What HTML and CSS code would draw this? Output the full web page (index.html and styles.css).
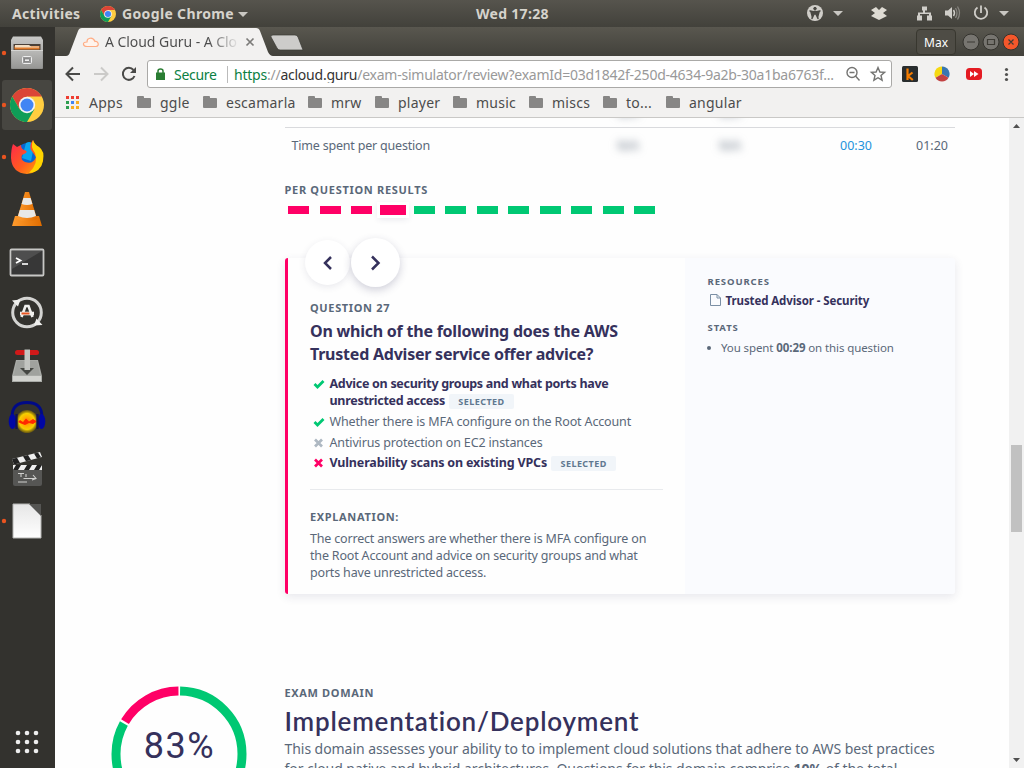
FILE: index.html
```html
<!DOCTYPE html>
<html lang="en">
<head>
<meta charset="utf-8">
<title>A Cloud Guru - A Cloud Guru</title>
<link rel="stylesheet" href="styles.css">
</head>
<body>
<div class="desktop">
  <header class="topbar">
    <span class="activities">Activities</span>
    <svg class="app-icon" width="16" height="16" viewBox="0 0 34 34"><use href="#chrome"/></svg>
    <span class="app-name">Google Chrome</span>
    <svg class="app-caret" width="10" height="5"><path d="M0 0H10L5 5Z" fill="#c9c7c2"/></svg>
    <span class="clock">Wed 17:28</span>
    <svg class="tray" width="224" height="27" viewBox="800 0 224 27">
      <circle cx="815" cy="13" r="8" fill="#d0cec9"/>
      <g fill="#494843" stroke="#494843"><circle cx="815" cy="8.600" r="1.300"/><path d="M810 11L814 11.8V14L812 18.5M820 11L816 11.8V14L818 18.5M814.500 11.500H815.500V14H814.500Z" stroke-width="1.500" stroke-linecap="round"/></g>
      <path d="M833 11H843L838 16ZM999 11H1009L1004 16Z" fill="#c9c7c2"/>
      <path d="M871 10L876 7L879 10L882 7L887 10L883 13L887 16L879 20L871 16L875 13Z" fill="#dedbd3"/>
      <path d="M922 6.500h5v4h-2v2h6v3h1v5h-5v-5h2v-1.500h-9v1.500h2v5h-5v-5h1v-3h5v-2h-1Z" fill="#d0cec9"/>
      <path d="M945 10.500h3l4-3.500v12l-4-3.500h-3Z" fill="#d0cec9"/>
      <path d="M953.500 10q2 3 0 6" fill="none" stroke="#d0cec9" stroke-width="1.400"/>
      <path d="M955.500 8q3 5 0 10M957.500 6.500q4 6.500 0 13" fill="none" stroke="#87857f" stroke-width="1.300"/>
      <path d="M977.500 7.500a6.200 6.200 0 1 0 7 0M981 5.500V13" fill="none" stroke="#d0cec9" stroke-width="1.800"/>
    </svg>
  </header>

  <div class="workspace">
    <nav class="dock">
      <svg width="55" height="741" viewBox="0 27 55 741">
        <defs>
          <linearGradient id="silver" x2="0" y2="1"><stop stop-color="#c9c9c7"/><stop offset="1" stop-color="#8d8d8b"/></linearGradient>
          <linearGradient id="front" x2="0" y2="1"><stop stop-color="#b9b9b7"/><stop offset="1" stop-color="#979795"/></linearGradient>
          <linearGradient id="fox" x2="1" y2="1"><stop stop-color="#ff244f"/><stop offset=".55" stop-color="#ff5b20"/><stop offset="1" stop-color="#ffb500"/></linearGradient>
          <linearGradient id="cone" x2="1"><stop stop-color="#ff9b2d"/><stop offset="1" stop-color="#e06d00"/></linearGradient>
          <linearGradient id="paper" x2="0" y2="1"><stop stop-color="#e6e6e6"/><stop offset="1" stop-color="#fff"/></linearGradient>
          <radialGradient id="flame"><stop stop-color="#ff7a00"/><stop offset=".4" stop-color="#ffb000"/><stop offset=".7" stop-color="#f5d000"/><stop offset="1" stop-color="#8a7000" stop-opacity=".6"/></radialGradient>
          <symbol id="chrome" viewBox="0 0 34 34">
            <circle cx="17" cy="17" r="17" fill="#ffcd40"/>
            <path d="M2.280 8.500A17 17 0 0 1 31.700 8.500H17L9.600 21.200Z" fill="#db4437"/>
            <path d="M2.280 8.500A17 17 0 0 0 17 34L24.400 21.200L9.600 21.200Z" fill="#0f9d58"/>
            <circle cx="17" cy="17" r="8.200" fill="#f3f3f3"/><circle cx="17" cy="17" r="6.500" fill="#4285f4"/>
          </symbol>
        </defs>
        <rect x="2" y="80" width="50" height="50" rx="3" fill="#474641"/>
        <g fill="#e95420"><circle cx="4" cy="53" r="2.200"/><circle cx="4" cy="105" r="2.200"/><circle cx="4" cy="157" r="2.200"/><circle cx="4" cy="521" r="2.200"/></g>
        <path d="M13 36.500H41L43 40V68Q43 69 42 69H12Q11 69 11 68V40Z" fill="url(#silver)"/>
        <path d="M13.500 44H40.500V51H13.500Z" fill="#4b4038"/><path d="M14.500 46H39.500V49.500H14.500Z" fill="#e07b2b"/><path d="M15 45H29L31 46.500H39V47.500H15Z" fill="#f3ddc1"/>
        <path d="M12 50.500H42V68H12Z" fill="url(#front)"/><path d="M11 50H43V51H11Z" fill="#d5d5d3"/>
        <rect x="22.500" y="56.500" width="9" height="7" rx="1" fill="#999" stroke="#eee"/><rect x="24.500" y="59" width="5" height="2.500" fill="#eee" stroke="#666" stroke-width=".6"/>
        <use href="#chrome" x="10" y="88" width="34" height="34"/>
        <circle cx="28" cy="156" r="13" fill="#0867d2"/><path d="M26 143Q31 140 34 146L31 161L22 158Z" fill="#0aa5ee"/>
        <path d="M13 144L17 147L21 145Q21 149 24 150Q28 151 26 153L22 155Q20 160 25 162Q33 165 36 157L31 150Q29 145 33 140Q35 146 39 147Q45 155 42 163Q37 174 27 174Q12 173 11 158Q11 149 13 144Z" fill="url(#fox)"/>
        <path d="M33 140Q30 147 35 153Q39 163 29 173Q41 172 43 161Q45 151 39 147Q34 144 33 140Z" fill="#ffd400"/>
        <path d="M15 216H39L42 226H12Z" fill="url(#cone)"/>
        <path d="M25 192H29L37 219Q27 224 17 219Z" fill="url(#cone)"/><path d="M23.400 198H30.600L32.400 204Q27 206 21.600 204ZM19.800 210H34.200L36 216Q27 220 18 216Z" fill="#e8e8e6"/>
        <rect x="10.500" y="249.500" width="33" height="26" rx="1" fill="#373737" stroke="#c7c7c5" stroke-width="1.800"/><path d="M12 251H42L12 269Z" fill="#4e4e4e"/>
        <path d="M16 258L20.500 260.500L16 263" fill="none" stroke="#fff" stroke-width="1.800"/><path d="M22 264H28" stroke="#fff" stroke-width="1.600"/>
        <circle cx="27" cy="312.500" r="14.300" fill="none" stroke="#d4d4d2" stroke-width="3"/>
        <path d="M12 300.500L20.500 299.500L18 306.500ZM42.500 325L34 325.500L36.500 318.500Z" fill="#efefed"/>
        <path d="M21.500 317L25.500 306H28.500L32.500 317" fill="none" stroke="#f0f0ee" stroke-width="2.600"/><path d="M20 313.500H34" stroke="#f0f0ee" stroke-width="3.600"/><path d="M21.500 313.500H29.500" stroke="#e95420" stroke-width="2"/>
        <path d="M16 360H38L42 376V382H12V376Z" fill="#a9aba7"/><path d="M17 361H37L40 375H14Z" fill="#a0a29e"/><path d="M13 376H41V381H13Z" fill="#d2d3cf"/><path d="M20 368H34L27 375Z" fill="#454743"/>
        <rect x="15" y="350" width="24" height="5" rx="2.500" fill="#d01919"/><path d="M24.500 349.500H30V370H24.500Z" fill="#c3c5c1"/>
        <ellipse cx="27" cy="421.500" rx="11" ry="11.500" fill="url(#flame)"/><path d="M18 422L20 420L23 422L26 418.500L29 421.500L33 419L37 421.500L33 424L29 423L25 425L21 423.500Z" fill="#ff2800"/>
        <path d="M12 417Q12 402.500 27 402.500T42 417" fill="none" stroke="#000a87" stroke-width="2.800"/><ellipse cx="12.500" cy="421.500" rx="3.800" ry="7.500" fill="#0007a4"/><ellipse cx="41.500" cy="421.500" rx="3.800" ry="7.500" fill="#0007a4"/><path d="M16.500 414V429M37.500 414V429" stroke="#111252" stroke-width="2.200"/>
        <path d="M13 466H42V484Q42 486 40 486H15Q13 486 13 484Z" fill="#565654"/><path d="M12 459L40 452L42 457L14 464.500Z" fill="#eee"/><path d="M12 459L17 457.700L20 463L14 464.500ZM23 456.200L28 455L31 460L26 461.300ZM34 453.500L38 452.500L41 457.300L37 458.400Z" fill="#222"/>
        <path d="M13 465H42V470H13Z" fill="#eee"/><path d="M16 465H21L18 470H13ZM27 465H32L29 470H24ZM37 465H42L39 470H34Z" fill="#222"/>
        <path d="M18 473.500H24M21 473.500V477M26 474V477M23.500 478.500H35M18 482H27M33 475L36 478.500L32 480" fill="none" stroke="#cfcfcd" stroke-width="1.100"/>
        <path d="M13 504H30L41 515V538H13Z" fill="url(#paper)" stroke="#b5b5b3"/><path d="M29 504H41V516Z" fill="#555553"/>
        <g fill="#eee"><circle cx="18" cy="733" r="2.300"/><circle cx="27" cy="733" r="2.300"/><circle cx="36" cy="733" r="2.300"/><circle cx="18" cy="742" r="2.300"/><circle cx="27" cy="742" r="2.300"/><circle cx="36" cy="742" r="2.300"/><circle cx="18" cy="751" r="2.300"/><circle cx="27" cy="751" r="2.300"/><circle cx="36" cy="751" r="2.300"/></g>
      </svg>
    </nav>

    <main class="browser">
      <div class="tabstrip">
        <svg class="tab-shape" width="250" height="29" viewBox="55 27 250 29">
          <path d="M66 56Q69 56 70 52L78 31Q79 28 82 28H256Q259 28 260 31L268 52Q270 56 273 56Z" fill="#f2f1f0"/>
          <path d="M273 35H295Q297 35 298 37L303 50H280Q278 50 277 48L271 37Q270 35 273 35Z" fill="#cdccca" stroke="#3a3934" stroke-width=".7"/>
          <path d="M87 46.500H96Q99 46 98 43Q97 41 95 41.500Q93 37 89 38.500Q87 39 87 42Q83 42 83.500 44.500Q84 46.500 87 46.500Z" fill="#fff4ed" stroke="#ffad85" stroke-width="1.200"/>
          <path d="M246.500 38.500L253.500 45.500M253.500 38.500L246.500 45.500" stroke="#7c7b79" stroke-width="1.700"/>
        </svg>
        <span class="tab-title">A Cloud Guru - A Clo</span>
        <span class="user-button">Max</span>
        <svg class="window-buttons" width="60" height="29" viewBox="960 27 60 29">
          <g stroke="#34332e"><circle cx="971" cy="42" r="8" fill="#777570"/><circle cx="991" cy="42" r="8" fill="#777570"/><circle cx="1011" cy="42" r="8" fill="#f4572b"/></g>
          <path d="M967 42H975M987.500 39.500H994.500V44.500H987.500ZM1008.500 39.500L1013.500 44.500M1013.500 39.500L1008.500 44.500" fill="none" stroke="#3d3b35" stroke-width="1.200"/>
        </svg>
      </div>
      <div class="toolbar">
        <svg width="92" height="34" viewBox="55 56 92 34" fill="none" stroke="#4a4a48" stroke-width="2">
          <path d="M80 74H67M73 67.500L66.500 74L73 80.500"/><path d="M94 74H107M101 67.500L107.500 74L101 80.500" stroke="#cbcac8"/>
          <path d="M133.500 70A6 6 0 1 0 134.500 76"/><path d="M136 67V73H130Z" fill="#4a4a48" stroke="none"/>
        </svg>
        <div class="omnibox">
          <svg class="lock" width="9" height="12"><path d="M0 4.500H9V12H0Z" fill="#2a7d33"/><path d="M2 5V3Q2 1 4.500 1T7 3V5" fill="none" stroke="#2a7d33" stroke-width="1.500"/></svg>
          <span class="secure">Secure</span>
          <span class="url"><span class="scheme">https</span>://<b class="host">acloud.guru</b>/exam-simulator/review?examId=03d1842f-250d-4634-9a2b-30a1ba6763f...</span>
          <svg class="omni-icons" width="44" height="24" viewBox="844 62 44 24" fill="none" stroke="#747472" stroke-width="1.400">
            <circle cx="852" cy="72.500" r="5"/><path d="M849.500 72.500H854.500M855.500 76L859.500 80.500"/>
            <path d="M878 67.500L879.900 72L884.600 72.400L881 75.500L882.100 80.200L878 77.700L873.900 80.200L875 75.500L871.400 72.400L876.100 72Z"/>
          </svg>
        </div>
        <svg class="extensions" width="128" height="34" viewBox="896 56 128 34">
          <rect x="902" y="66" width="16" height="16" rx="1.500" fill="#292d2e"/><path d="M907.500 68.500V80M912.500 72.500L908 76L912.800 80" fill="none" stroke="#f57c00" stroke-width="2.200"/>
          <path d="M942 74V66.500A7.500 7.500 0 0 0 935.500 77.800Z" fill="#f6d912"/><path d="M942 74V66.500A7.500 7.500 0 0 1 948.500 77.800Z" fill="#3976b0"/><path d="M942 74L935.500 77.800A7.500 7.500 0 0 0 948.500 77.800Z" fill="#c34242"/>
          <rect x="966" y="68" width="16" height="12" rx="3.500" fill="#e41b22"/><path d="M970 71L974 74L970 77ZM974 71L978.500 74L974 77Z" fill="#fff"/>
          <g fill="#51514f"><circle cx="1006.500" cy="69.500" r="1.600"/><circle cx="1006.500" cy="74.500" r="1.600"/><circle cx="1006.500" cy="79.500" r="1.600"/></g>
        </svg>
      </div>
      <div class="bookmarks">
        <svg class="apps" width="14" height="14"><g><path d="M0 0h3v3H0zM5 0h3v3H5zM10 0h3v3h-3z" fill="#ee3d32"/><path d="M0 5h3v3H0z" fill="#2e9d50"/><path d="M5 5h3v3H5z" fill="#4285f4"/><path d="M10 5h3v3h-3z" fill="#f7ad24"/><path d="M0 10h3v3H0z" fill="#2e9d50"/><path d="M5 10h3v3H5zM10 10h3v3h-3z" fill="#f7ad24"/></g></svg>
        <span class="bm bm-apps">Apps</span>
        <i class="folder"></i><span class="bm bm-ggle">ggle</span>
        <i class="folder"></i><span class="bm bm-escamarla">escamarla</span>
        <i class="folder"></i><span class="bm bm-mrw">mrw</span>
        <i class="folder"></i><span class="bm bm-player">player</span>
        <i class="folder"></i><span class="bm bm-music">music</span>
        <i class="folder"></i><span class="bm bm-miscs">miscs</span>
        <i class="folder"></i><span class="bm bm-to">to...</span>
        <i class="folder"></i><span class="bm">angular</span>
      </div>

      <div class="viewport">
        <div class="page">
          <div class="previous-row"><span class="smudge first">N/A</span><span class="smudge second">N/A</span></div>
          <div class="time-row"><span class="time-label">Time spent per question</span><span class="smudge first">N/A</span><span class="smudge second">N/A</span><span class="mine">00:30</span><span class="average">01:20</span></div>
          <h4 class="eyebrow results-title">PER QUESTION RESULTS</h4>
          <div class="results">
            <i class="bad"></i><i class="bad"></i><i class="bad"></i><i class="bad current"></i><i></i><i></i><i></i><i></i><i></i><i></i><i></i><i></i>
          </div>
          <section class="card">
            <div class="pager">
              <span class="prev"><svg width="12" height="16" viewBox="0 0 12 16"><path d="M9 2L3 8L9 14"/></svg></span>
              <span class="next"><svg width="12" height="16" viewBox="0 0 12 16"><path d="M2 1.500L8.500 8L2 14.500"/></svg></span>
            </div>
            <div class="question">
              <h4 class="eyebrow question-no">QUESTION 27</h4>
              <h2 class="heading">On which of the following does the AWS<br>Trusted Adviser service offer advice?</h2>
              <ul class="answers">
                <li class="chosen two-line"><svg class="mark" width="12" height="12"><path d="M1.500 6L4.500 9L10.500 3" fill="none" stroke="#00c873" stroke-width="2.800"/></svg><span>Advice on security groups and what ports have<br>unrestricted access <em>SELECTED</em></span></li>
                <li><svg class="mark" width="12" height="12"><path d="M1.500 6L4.500 9L10.500 3" fill="none" stroke="#00c873" stroke-width="2.800"/></svg><span>Whether there is MFA configure on the Root Account</span></li>
                <li><svg class="mark" width="12" height="12"><path d="M2 2.500L9 9.500M9 2.500L2 9.500" stroke="#aeb8c2" stroke-width="2.700"/></svg><span>Antivirus protection on EC2 instances</span></li>
                <li class="chosen last"><svg class="mark" width="12" height="12"><path d="M2 2.500L9 9.500M9 2.500L2 9.500" stroke="#ff0066" stroke-width="2.700"/></svg><span>Vulnerability scans on existing VPCs <em>SELECTED</em></span></li>
              </ul>
              <h4 class="eyebrow explanation-title">EXPLANATION:</h4>
              <p class="explanation">The correct answers are whether there is MFA configure on<br>the Root Account and advice on security groups and what<br>ports have unrestricted access.</p>
            </div>
            <aside class="side">
              <h5>RESOURCES</h5>
              <a class="resource"><svg width="11" height="13"><path d="M.5.500H7L10.500 4V11.500H.5ZM7 .5V4H10.500" fill="none" stroke="#7b8fa5"/></svg><span>Trusted Advisor - Security</span></a>
              <h5>STATS</h5>
              <p class="stat"><i></i>You spent <b>00:29</b> on this question</p>
            </aside>
          </section>
          <section class="domain">
            <div class="ring">
              <svg width="136" height="136" viewBox="0 0 136 136"><g fill="none" stroke-width="9" transform="rotate(-90 68 68)"><circle cx="68" cy="68" r="63" pathLength="360" stroke="#00c873" stroke-dasharray="298 62" stroke-dashoffset="-1"/><circle cx="68" cy="68" r="63" pathLength="360" stroke="#ff0066" stroke-dasharray="58.500 301.500" stroke-dashoffset="-301"/></g></svg>
              <span class="percent">83%</span>
            </div>
            <div class="domain-text">
              <h4 class="eyebrow">EXAM DOMAIN</h4>
              <h1>Implementation/Deployment</h1>
              <p>This domain assesses your ability to to implement cloud solutions that adhere to AWS best practices<br>for cloud native and hybrid architectures. Questions for this domain comprise <b>10%</b> of the total</p>
            </div>
          </section>
        </div>
        <div class="scrollbar"><svg width="15" height="650"><path d="M4 10L7.500 6L11 10ZM4 640H11L7.500 644Z" fill="#505050"/><rect x="2" y="327" width="11" height="87" fill="#c1c1c1"/></svg></div>
      </div>
    </main>
  </div>
</div>
</body>
</html>
```
FILE: styles.css
```css
* { box-sizing: border-box; }
body, h1, h2, h4, h5, p, ul { margin: 0; padding: 0; }
body { font-family: "Noto Sans", "Open Sans", sans-serif; color: #5a6879; }
svg { display: block; flex: none; }
span { white-space: nowrap; }
.desktop { width: 1024px; height: 768px; overflow: hidden; display: flex; flex-direction: column; }

.topbar { height: 27px; flex: none; display: flex; align-items: center; background: linear-gradient(#56544d, #42413b); color: #d6d3cc; font-size: 14px; font-weight: 700; line-height: 27px; }
.activities { width: 88px; padding-left: 12px; letter-spacing: .35px; }
.app-icon { margin-left: 12px; }
.app-name { width: 116px; margin-left: 6px; letter-spacing: .35px; }
.app-caret { margin-top: 1px; }
.clock { width: 72px; margin-left: 228px; letter-spacing: .3px; }
.tray { margin-left: auto; }

.workspace { height: 741px; display: flex; }
.dock { width: 55px; flex: none; background: #33322e; }
.browser { width: 969px; display: flex; flex-direction: column; background: #f2f1f0; }
.tabstrip { height: 29px; flex: none; display: flex; position: relative; background: linear-gradient(#59574f, #42413b); }
.tab-shape { position: absolute; left: 0; top: 0; }
.tab-title { position: relative; width: 134px; margin-left: 50px; overflow: hidden; font-size: 14px; letter-spacing: -.05px; line-height: 29px; color: transparent; background: linear-gradient(90deg, #4c4c4c 104px, rgba(76,76,76,.05) 133px); -webkit-background-clip: text; background-clip: text; }
.user-button { width: 40px; height: 26px; margin: 2px 4px 0 auto; border: 1px solid #38372f; border-radius: 4px; background: #4e4c45; color: #fff; font-size: 12px; line-height: 25px; text-align: center; }
.window-buttons { margin-right: 4px; }

.toolbar { height: 34px; flex: none; display: flex; }
.omnibox { width: 745px; height: 28px; margin-top: 4px; border: 1px solid #aaa9a7; border-radius: 3px; background: #fff; display: flex; align-items: center; font-size: 14px; color: #999; }
.lock { margin-left: 8px; }
.secure { width: 45px; margin-left: 9px; color: #0b8043; letter-spacing: -.3px; }
.url { width: 610px; margin-left: 8px; padding-left: 6px; border-left: 1px solid #bbb; line-height: 17px; letter-spacing: -.235px; overflow: hidden; }
.scheme { color: #0b8043; }
.host { color: #333; font-weight: 400; }
.omni-icons { margin-left: 7px; }
.extensions { margin-left: 4px; }

.bookmarks { height: 28px; flex: none; display: flex; align-items: center; padding: 0 0 2px 11px; border-bottom: 1px solid #c9c8c6; font-size: 14px; letter-spacing: .25px; color: #4c4c4c; }
.folder { width: 14px; height: 10px; margin-right: 9px; position: relative; border-radius: 1px; background: #878685; flex: none; }
.folder::before { content: ""; position: absolute; left: 0; top: -2px; width: 7px; height: 3px; border-radius: 1px; background: #878685; }
.bm-apps { width: 48px; margin-left: 9px; }
.bm-ggle { width: 43px; }
.bm-escamarla { width: 82px; }
.bm-mrw { width: 44px; }
.bm-player { width: 55px; }
.bm-music { width: 53px; }
.bm-miscs { width: 51px; }
.bm-to { width: 40px; }

.viewport { height: 650px; display: flex; background: #fefefe; overflow: hidden; }
.page { width: 954px; }
.scrollbar { width: 15px; background: #f1f1f1; }
.previous-row { width: 670px; height: 10px; margin-left: 230px; border-bottom: 1px solid #d9dadd; display: flex; line-height: 14px; }
.previous-row .smudge { height: 14px; margin-top: -12px; }
.time-row { width: 670px; height: 36px; margin-left: 230px; padding-left: 7px; display: flex; font-size: 12.500px; line-height: 35px; }
.time-label { width: 326px; margin-left: -.5px; letter-spacing: -.2px; }
.smudge { width: 23px; filter: blur(4px); font-size: 12px; }
.smudge.second { margin-left: 79px; }
.previous-row .first { margin-left: 332px; }
.mine { width: 32px; margin-left: 97.500px; color: #2493dc; }
.average { margin-left: 44px; }
.eyebrow { font-size: 11px; font-weight: 700; line-height: 16px; letter-spacing: .65px; color: #5a6879; white-space: nowrap; }
.results-title { margin: 18px 0 0 229.500px; letter-spacing: .7px; }
.results { display: flex; align-items: center; gap: 10.450px; height: 10px; margin: 7px 0 0 233.200px; }
.results i { width: 21px; height: 8px; background: #00c873; }
.results .bad { background: #ff0066; }
.results .current { width: 26px; height: 10px; margin: 0 -2.500px; box-shadow: 0 0 0 3px #fff, 0 2px 6px 2px rgba(50,50,93,.12); }

.card { position: relative; width: 670px; height: 336px; margin: 43px 0 0 230px; border-left: 3px solid #ff0066; border-radius: 3px; display: flex; background: #fefefe; box-shadow: 0 3px 10px rgba(50,50,93,.11); }
.pager { position: absolute; left: 17px; top: -20px; display: flex; align-items: center; }
.pager span { display: flex; align-items: center; justify-content: center; border-radius: 50%; background: #fff; }
.pager path { fill: none; stroke: #35315c; stroke-width: 2.500; }
.prev { width: 45px; height: 45px; box-shadow: 0 2px 7px rgba(50,50,93,.1); }
.next { width: 49px; height: 49px; margin-left: 1px; box-shadow: 0 3px 8px rgba(50,50,93,.23); }
.question { width: 397px; padding: 42px 22px 0; }
.heading { margin-top: 4px; color: #35315c; font-size: 16px; font-weight: 700; line-height: 23px; letter-spacing: -.23px; white-space: nowrap; }
.answers { list-style: none; height: 115px; margin-top: 9px; padding-left: 3px; border-bottom: 1px solid #e8eaed; font-size: 12.500px; line-height: 17px; }
.answers li { display: flex; gap: 4.500px; height: 20.500px; letter-spacing: -.14px; }
.answers .two-line { height: 38px; }
.answers .chosen { color: #35315c; font-weight: 700; letter-spacing: -.29px; }
.answers .last { letter-spacing: -.16px; }
.mark { margin: 3px 0 0; }
.answers em { display: inline-block; width: 65px; height: 15px; border-radius: 2px; background: #f1f5f9; color: #607890; font-size: 9px; font-style: normal; font-weight: 700; line-height: 15px; letter-spacing: .45px; text-align: center; vertical-align: 0; margin: -2px 0 -2px 1px; }
.explanation-title { margin-top: 19px; }
.explanation { margin-top: 5px; font-size: 12.500px; line-height: 17px; letter-spacing: -.18px; white-space: nowrap; }
.side { width: 270px; padding: 17px 0 0 22.500px; border-radius: 0 3px 3px 0; background: #fafbfe; }
h5 { font-size: 9.500px; font-weight: 700; line-height: 14px; letter-spacing: .9px; }
.resource { display: flex; align-items: center; gap: 4.500px; height: 18px; margin: 2px 0 12px 2.500px; color: #35315c; font-size: 11.500px; font-weight: 700; letter-spacing: -.1px; }
.stat { display: flex; align-items: center; margin-top: 4px; font-size: 11.500px; line-height: 17px; letter-spacing: -.1px; white-space: pre; }
.stat i { width: 4px; height: 4px; margin: 0 10px 0 -.5px; border-radius: 50%; background: #5a6879; }

.domain { display: flex; height: 90px; margin-top: 91px; padding-left: 56px; }
.ring { position: relative; width: 136px; height: 136px; margin: 1px 37.500px 0 0; }
.percent { position: absolute; left: 0; top: 40px; width: 137px; text-align: center; color: #35315c; font: 36px/40px Roboto, sans-serif; letter-spacing: 1.500px; }
h1 { margin-top: 4px; color: #35315c; font: 600 26px/32px Lato, sans-serif; white-space: nowrap; letter-spacing: .8px; }
.domain-text { white-space: nowrap; }
.domain-text p { margin-top: 2px; font-size: 14px; line-height: 20px; letter-spacing: -.055px; }
```
